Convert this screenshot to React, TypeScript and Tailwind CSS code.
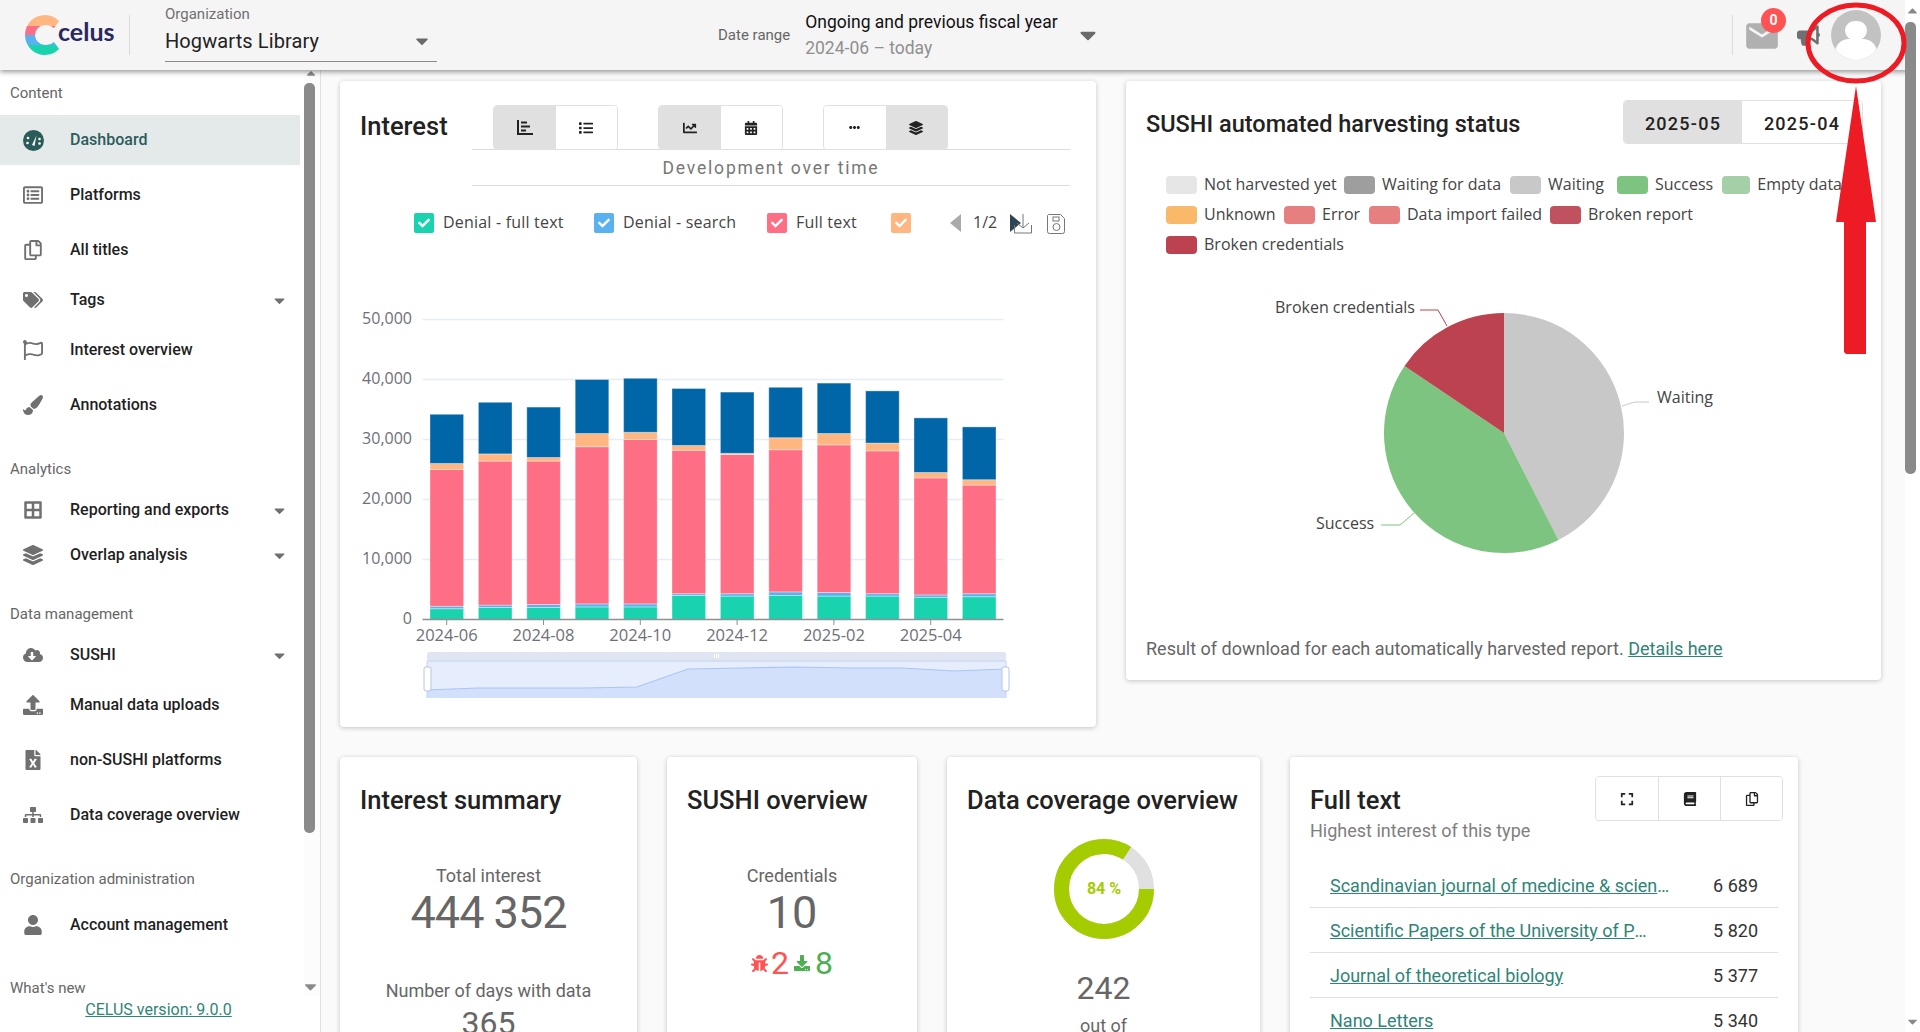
import type { ReactNode } from "react";
import {
  FaBook,
  FaBorderAll,
  FaBug,
  FaBullhorn,
  FaCalendarAlt,
  FaCaretDown,
  FaChartLine,
  FaCheck,
  FaCloudDownloadAlt,
  FaDownload,
  FaEllipsisH,
  FaExpand,
  FaFileExcel,
  FaLayerGroup,
  FaList,
  FaPaintBrush,
  FaRegCopy,
  FaRegFlag,
  FaRegListAlt,
  FaSitemap,
  FaTags,
  FaUpload,
  FaUser,
} from "react-icons/fa";
import { MdEmail } from "react-icons/md";

function GaugeIcon() {
  return (
    <svg width="21" height="21" viewBox="0 0 21 21">
      <circle cx="10.5" cy="10.5" r="10.5" fill="currentColor" />
      <path d="M9 15 L13.5 5.5 L11.5 16 Z" fill="#fff" />
      <circle cx="5" cy="8" r="1.3" fill="#fff" />
      <circle cx="4.5" cy="13" r="1.3" fill="#fff" />
      <circle cx="16.5" cy="9" r="1.3" fill="#fff" />
      <circle cx="16.5" cy="13.5" r="1.3" fill="#fff" />
    </svg>
  );
}

function AxisBarsIcon() {
  return (
    <svg width="16" height="15" viewBox="0 0 16 15" fill="currentColor">
      <path d="M0 0h2v13h14v2H0z" />
      <rect x="4" y="1.5" width="6" height="2" />
      <rect x="4" y="5.5" width="9" height="2" />
      <rect x="4" y="9.5" width="5" height="2" />
    </svg>
  );
}

type NavRow = {
  kind: "label" | "item";
  text: string;
  icon?: ReactNode;
  mt: string;
  caret?: boolean;
  active?: boolean;
};

const navRows: NavRow[] = [
  { kind: "label", text: "Content", mt: "mt-[11px]" },
  { kind: "item", text: "Dashboard", icon: <GaugeIcon />, mt: "mt-[10px]", active: true },
  { kind: "item", text: "Platforms", icon: <FaRegListAlt />, mt: "mt-[10px]" },
  { kind: "item", text: "All titles", icon: <FaRegCopy />, mt: "mt-[15px]" },
  { kind: "item", text: "Tags", icon: <FaTags />, mt: "mt-[10px]", caret: true },
  { kind: "item", text: "Interest overview", icon: <FaRegFlag />, mt: "mt-[10px]" },
  { kind: "item", text: "Annotations", icon: <FaPaintBrush />, mt: "mt-[15px]" },
  { kind: "label", text: "Analytics", mt: "mt-[32px]" },
  { kind: "item", text: "Reporting and exports", icon: <FaBorderAll />, mt: "mt-[9px]", caret: true },
  { kind: "item", text: "Overlap analysis", icon: <FaLayerGroup />, mt: "mt-[5px]", caret: true },
  { kind: "label", text: "Data management", mt: "mt-[27px]" },
  { kind: "item", text: "SUSHI", icon: <FaCloudDownloadAlt />, mt: "mt-[9px]", caret: true },
  { kind: "item", text: "Manual data uploads", icon: <FaUpload />, mt: "mt-[10px]" },
  { kind: "item", text: "non-SUSHI platforms", icon: <FaFileExcel />, mt: "mt-[15px]" },
  { kind: "item", text: "Data coverage overview", icon: <FaSitemap />, mt: "mt-[15px]" },
  { kind: "label", text: "Organization administration", mt: "mt-[32px]" },
  { kind: "item", text: "Account management", icon: <FaUser />, mt: "mt-[14px]" },
  { kind: "label", text: "What's new", mt: "mt-[31px]" },
];

// cumulated tops of the stacked bars, in thousands
const bars = [
  [1.8, 2.2, 25.0, 26.0, 34.2],
  [2.0, 2.4, 26.4, 27.6, 36.2],
  [2.0, 2.5, 26.4, 27.0, 35.4],
  [2.1, 2.6, 28.8, 31.0, 40.0],
  [2.1, 2.6, 30.0, 31.2, 40.2],
  [4.0, 4.3, 28.2, 29.0, 38.5],
  [3.9, 4.3, 27.5, 27.7, 37.9],
  [4.0, 4.6, 28.3, 30.3, 38.7],
  [3.9, 4.5, 29.1, 31.0, 39.4],
  [3.9, 4.3, 28.1, 29.4, 38.1],
  [3.7, 4.1, 23.6, 24.5, 33.6],
  [3.8, 4.3, 22.4, 23.3, 32.1],
];
const barColors = ["#19d3ae", "#5ab1ef", "#fe6e85", "#ffb680", "#0066a7"];
const axisDates = ["2024-06", "2024-08", "2024-10", "2024-12", "2025-02", "2025-04"];

const sliderLine: [number, number][] = [
  [427, 690], [478, 688], [532, 688], [585, 688], [637, 687], [688, 669],
  [742, 668], [795, 667], [849, 668], [902, 668], [954, 671], [1006, 669],
];

function Caret({ className }: { className: string }) {
  return <FaCaretDown className={className} />;
}

function Toggle({ items, active, divided }: { items: ReactNode[]; active: number[]; divided?: boolean }) {
  return (
    <div className="flex h-[45px] rounded border border-[#e0e0e0] overflow-hidden bg-white">
      {items.map((it, i) => (
        <div
          key={i}
          className={`${divided ? "w-[62px]" : "w-[61.5px]"} flex items-center justify-center text-[14px] text-[#222] ${active.includes(i) ? "bg-[#e0e0e0]" : "bg-white"} ${divided && i > 0 ? "border-l border-[#e0e0e0]" : ""}`}
        >
          {it}
        </div>
      ))}
    </div>
  );
}

function Sidebar() {
  return (
    <aside className="w-[321px] shrink-0 bg-white border-r border-[#e0e0e0] flex flex-col">
      <div className="flex h-[926px]">
        <div className="w-[304px] shrink-0">
          {navRows.map((r) =>
            r.kind === "label" ? (
              <div key={r.text} className={`${r.mt} h-[24px] pl-[10px] flex items-center text-[15px] text-[#666]`}>
                {r.text}
              </div>
            ) : (
              <div
                key={r.text}
                className={`${r.mt} ${r.active ? "h-[50px] w-[300px] bg-[#e4eaea] text-[#2c5c5a]" : "h-[40px] w-[300px] text-[#1f1f1f]"} flex items-center pl-[22px] pr-[12px] text-[16px] font-medium`}
              >
                <span className={`w-[22px] flex justify-center text-[20px] mr-[26px] ${r.active ? "text-[#2c5c5a]" : "text-[#707070]"}`}>
                  {r.icon}
                </span>
                <span className="flex-1">{r.text}</span>
                {r.caret && <Caret className="text-[17px] text-[#707070]" />}
              </div>
            ),
          )}
        </div>
        <div className="w-[16px] flex flex-col items-start bg-[#fcfcfc]">
          <FaCaretDown className="rotate-180 text-[14px] text-[#8a8a8a] -mt-[3px]" />
          <div className="w-[11px] h-[750px] mt-[2px] rounded-[5px] bg-[#8a8a8a]" />
          <div className="flex-1" />
          <FaCaretDown className="text-[19px] text-[#8a8a8a] -ml-[3px]" />
        </div>
      </div>
      <div className="h-[22px] mt-[2px] text-center pr-[3px]">
        <span className="text-[16px] leading-[22px] underline text-[#2e8577]">CELUS version: 9.0.0</span>
      </div>
    </aside>
  );
}

function Header() {
  return (
    <header className="relative z-10 h-[70px] shrink-0 bg-[#f5f5f5] shadow-[0_2px_5px_rgba(0,0,0,0.4)] flex items-center">
      <div className="w-[130px] h-[40px] border-r border-[#dcdcdc] shrink-0 flex items-center">
        <svg width="36" height="40" viewBox="0 0 36 40" className="ml-[25px] shrink-0">
          <defs>
            <clipPath id="logoC">
              <path d="M20 0a20 20 0 0 1 14 6l-5 7a12 12 0 0 0-9-3 10 10 0 0 0 0 20 12 12 0 0 0 9-3l5 7a20 20 0 0 1-14 6A20 20 0 0 1 20 0z" />
            </clipPath>
          </defs>
          <g clipPath="url(#logoC)">
            <rect x="0" y="0" width="36" height="11" fill="#ffb680" />
            <rect x="0" y="11" width="36" height="9" fill="#fe6e85" />
            <rect x="0" y="20" width="36" height="10" fill="#5ab1ef" />
            <rect x="0" y="30" width="36" height="10" fill="#19d3ae" />
          </g>
        </svg>
        <span className="-ml-[3px] -mt-[8px] text-[25px] leading-none font-bold font-['Lato'] text-[#28285e]">celus</span>
      </div>
      <div className="ml-[35px] w-[272px] h-[62px] self-start flex flex-col border-b border-[#8a8a8a]">
        <span className="text-[15px] leading-[16px] mt-[6px] text-[#707070]">Organization</span>
        <div className="flex items-center justify-between mt-[5px] pr-[5px]">
          <span className="text-[20px] leading-[28px] tracking-[0.1px] text-[#222]">Hogwarts Library</span>
          <Caret className="text-[20px] text-[#6a6a6a]" />
        </div>
      </div>
      <span className="ml-[281px] text-[15px] text-[#666]">Date range</span>
      <div className="ml-[15px] w-[270px] flex flex-col">
        <span className="text-[17.5px] leading-[24px] text-[#111]">Ongoing and previous fiscal year</span>
        <span className="mt-[2px] text-[17.5px] leading-[24px] text-[#8f8f8f]">2024-06 – today</span>
      </div>
      <Caret className="text-[26px] text-[#6a6a6a]" />
      <div className="flex-1" />
      <div className="h-[40px] border-l border-[#dcdcdc]" />
      <div className="relative ml-[10px] mt-[2px] text-[#b0b0b0] text-[38px]">
        <MdEmail />
        <span className="absolute -top-[9px] left-[18px] w-[25px] h-[25px] rounded-full bg-[#ff5252] text-white text-[14px] font-bold flex items-center justify-center">0</span>
      </div>
      <FaBullhorn className="ml-[16px] text-[23px] text-[#707070]" />
      <div className="ml-[11px] w-[50px] h-[50px] rounded-full bg-[#c2c2c2] overflow-hidden flex flex-col items-center">
        <div className="mt-[11px] w-[22px] h-[22px] rounded-full bg-white" />
        <div className="-mt-[1px] w-[42px] h-[24px] rounded-t-[14px] bg-white" />
      </div>
      <div className="w-[39px]" />
    </header>
  );
}

function LegendCheck({ color, text, width }: { color: string; text?: string; width: string }) {
  const box = color === "teal" ? "bg-[#19d3ae]" : color === "blue" ? "bg-[#5ab1ef]" : color === "pink" ? "bg-[#fe6e85]" : "bg-[#ffb680]";
  return (
    <div className={`${width} flex items-center`}>
      <span className={`w-[20px] h-[20px] rounded-[2px] ${box} flex items-center justify-center text-white text-[12px]`}>
        <FaCheck />
      </span>
      {text && <span className="ml-[9px] -mt-[3px] font-['Open_Sans'] text-[16px] tracking-[0.2px] text-[#444] whitespace-nowrap">{text}</span>}
    </div>
  );
}

function BarChart() {
  const y = (v: number) => 619.5 - v * 6;
  const barX = (i: number) => 430 + i * 48.4;
  return (
    <svg viewBox="340 290 756 430" width="756" height="430" className="block mt-[57px] font-['Open_Sans']">
      {[10, 20, 30, 40, 50].map((v) => (
        <line key={v} x1="422.5" x2="1003.5" y1={y(v)} y2={y(v)} stroke="#e8ecf4" strokeWidth="1.5" />
      ))}
      {[0, 10, 20, 30, 40, 50].map((v) => (
        <text key={v} x="412" y={y(v) + 4} textAnchor="end" fontSize="16" fill="#6e7079">
          {v === 0 ? "0" : `${v},000`}
        </text>
      ))}
      {bars.map((b, i) =>
        b.map((top, s) => {
          const prev = s === 0 ? 0 : b[s - 1];
          return (
            <rect
              key={s}
              x={barX(i)}
              y={y(top)}
              width="33.6"
              height={y(prev) - y(top)}
              fill={barColors[s]}
              stroke="#ffffff"
              strokeOpacity="0.35"
              strokeWidth="1"
            />
          );
        }),
      )}
      <line x1="422.5" x2="1003.5" y1="619.5" y2="619.5" stroke="#8f8f96" strokeWidth="1.5" />
      {axisDates.map((d, i) => (
        <g key={d}>
          <line x1={446.7 + i * 96.8} x2={446.7 + i * 96.8} y1="619.5" y2="625" stroke="#8f8f96" />
          <text x={446.7 + i * 96.8} y="641" textAnchor="middle" fontSize="16.5" fill="#6e7079">
            {d}
          </text>
        </g>
      ))}
      <rect x="427" y="652" width="579" height="9" rx="2" fill="#dfe5f2" />
      <rect x="427" y="661" width="579" height="37" fill="#e6edfd" />
      <path
        d={`M427 698 L${sliderLine.map((p) => p.join(" ")).join(" L")} L1006 698 Z`}
        fill="#d3e0fb"
      />
      <polyline points={sliderLine.map((p) => p.join(",")).join(" ")} fill="none" stroke="#a9c4f7" strokeWidth="1.2" />
      <line x1="427" x2="427" y1="661" y2="698" stroke="#c5d2ec" />
      <line x1="1006" x2="1006" y1="661" y2="698" stroke="#c5d2ec" />
      <line x1="427" x2="1006" y1="661" y2="661" stroke="#c5d2ec" />
      <rect x="424" y="667" width="7" height="24" rx="2" fill="#fff" stroke="#b4c4e6" />
      <rect x="1002" y="667" width="7" height="24" rx="2" fill="#fff" stroke="#b4c4e6" />
      <rect x="714" y="654" width="1" height="4" fill="#fff" />
      <rect x="716" y="654" width="1" height="4" fill="#fff" />
      <rect x="718" y="654" width="1" height="4" fill="#fff" />
    </svg>
  );
}

function InterestCard() {
  return (
    <section className="w-[756px] h-[646px] shrink-0 bg-white rounded shadow-[0_1px_5px_rgba(0,0,0,0.22)]">
      <div className="flex">
        <div className="w-[132px] pl-[20px] pt-[27px] text-[25.5px] leading-[36px] font-medium text-[#222]">Interest</div>
        <div className="w-[598px]">
          <div className="h-[69px] pt-[24px] pl-[21px] flex gap-[40px] border-b border-[#dcdcdc]">
            <Toggle items={[<AxisBarsIcon key="a" />, <FaList key="b" />]} active={[0]} />
            <Toggle items={[<FaChartLine key="a" />, <FaCalendarAlt key="b" />]} active={[0]} />
            <Toggle items={[<FaEllipsisH key="a" className="text-[11px]" />, <FaLayerGroup key="b" />]} active={[1]} />
          </div>
          <div className="h-[36px] pt-[2px] flex items-center justify-center border-b border-[#dcdcdc] text-[17.5px] tracking-[1.8px] text-[#777]">
            Development over time
          </div>
        </div>
      </div>
      <div className="mt-[27px] h-[20px] pl-[74px] flex items-center">
        <LegendCheck color="teal" text="Denial - full text" width="w-[180px]" />
        <LegendCheck color="blue" text="Denial - search" width="w-[173px]" />
        <LegendCheck color="pink" text="Full text" width="w-[124px]" />
        <LegendCheck color="orange" width="w-[59px]" />
        <span className="w-0 h-0 border-y-[9px] border-y-transparent border-r-[11px] border-r-[#aaa]" />
        <span className="ml-[12px] -mt-[3px] w-[37px] font-['Open_Sans'] text-[16px] text-[#444]">1/2</span>
        <span className="w-0 h-0 border-y-[9px] border-y-transparent border-l-[11px] border-l-[#2f4554]" />
        <svg width="18" height="20" viewBox="0 0 18 20" className="-ml-[7px] mt-[2px]" fill="none" stroke="#777" strokeWidth="1">
          <path d="M9 0v14M3 9l6 5 6-5M0.5 11v8h17v-8" />
        </svg>
        <svg width="19" height="20" viewBox="0 0 19 20" className="ml-[15px] mt-[2px]" fill="none" stroke="#777" strokeWidth="1">
          <path d="M1.5 0.5h12l4 4v13a2 2 0 0 1-2 2h-13a2 2 0 0 1-2-2v-16z" />
          <rect x="6" y="3" width="6" height="4" />
          <circle cx="9.5" cy="13" r="3.5" />
        </svg>
      </div>
      <BarChart />
    </section>
  );
}

const sushiLegend = [
  [
    { t: "Not harvested yet", c: "bg-[#e6e6e6]", w: "w-[178px]" },
    { t: "Waiting for data", c: "bg-[#9e9e9e]", w: "w-[166px]" },
    { t: "Waiting", c: "bg-[#c8c8c8]", w: "w-[107px]" },
    { t: "Success", c: "bg-[#7cc47f]", w: "w-[105px]" },
    { t: "Empty data", c: "bg-[#a5d0a7]", w: "w-[120px]" },
  ],
  [
    { t: "Unknown", c: "bg-[#f9b968]", w: "w-[118px]" },
    { t: "Error", c: "bg-[#e68080]", w: "w-[85px]" },
    { t: "Data import failed", c: "bg-[#e68080]", w: "w-[181px]" },
    { t: "Broken report", c: "bg-[#c05260]", w: "w-[145px]" },
  ],
  [{ t: "Broken credentials", c: "bg-[#bc4250]", w: "w-[180px]" }],
];

function slice(start: number, end: number) {
  const cx = 1504;
  const cy = 432;
  const r = 120;
  const pt = (a: number) => {
    const rad = (a * Math.PI) / 180;
    return `${cx + r * Math.sin(rad)} ${cy - r * Math.cos(rad)}`;
  };
  return `M${cx} ${cy} L${pt(start)} A${r} ${r} 0 ${end - start > 180 ? 1 : 0} 1 ${pt(end)} Z`;
}

function HarvestCard() {
  return (
    <section className="w-[755px] h-[599px] shrink-0 bg-white rounded shadow-[0_1px_5px_rgba(0,0,0,0.22)] overflow-hidden">
      <div className="flex pt-[19px] pl-[20px]">
        <div className="flex-1 h-[44px] pt-[6px] flex items-center text-[23.5px] font-medium text-[#222]">
          SUSHI automated harvesting status
        </div>
        <div className="flex h-[44px] mr-[18px] rounded border border-[#e0e0e0] overflow-hidden text-[18px] font-medium tracking-[1.25px] text-[#222]">
          <div className="w-[118px] pt-[2px] bg-[#e0e0e0] flex items-center justify-center">2025-05</div>
          <div className="w-[120px] pt-[2px] bg-white flex items-center justify-center">2025-04</div>
        </div>
      </div>
      <div className="mt-[32px] ml-[40px] flex flex-col gap-[12px]">
        {sushiLegend.map((row, i) => (
          <div key={i} className="flex h-[18px]">
            {row.map((l) => (
              <div key={l.t} className={`${l.w} shrink-0 flex items-center`}>
                <span className={`w-[31px] h-[18px] rounded-[4px] ${l.c}`} />
                <span className="ml-[7px] -mt-[3px] font-['Open_Sans'] text-[16px] text-[#444] whitespace-nowrap">{l.t}</span>
              </div>
            ))}
          </div>
        ))}
      </div>
      <svg viewBox="1126 275 755 340" width="755" height="340" className="block mt-[22px] font-['Open_Sans']">
        <path d={slice(0, 153)} fill="#c8c8c8" />
        <path d={slice(153, 304)} fill="#7cc47f" />
        <path d={slice(304, 360)} fill="#bc4250" />
        <polyline points="1420,309 1438,309 1447,325" fill="none" stroke="#bc4250" />
        <polyline points="1649,401 1635,401 1622,405" fill="none" stroke="#c8c8c8" />
        <polyline points="1381,524 1400,524 1414,512" fill="none" stroke="#7cc47f" />
        <text x="1275" y="312" fontSize="16" fill="#444">Broken credentials</text>
        <text x="1657" y="402" fontSize="16" fill="#444">Waiting</text>
        <text x="1316" y="528" fontSize="16" fill="#444">Success</text>
      </svg>
      <p className="mt-[21px] pl-[20px] text-[18px] leading-[24px] text-[#666]">
        Result of download for each automatically harvested report.{" "}
        <span className="underline text-[#2e8577]">Details here</span>
      </p>
    </section>
  );
}

function SmallCard({ width, title, children }: { width: string; title: string; children: ReactNode }) {
  return (
    <section className={`${width} h-[420px] shrink-0 bg-white rounded shadow-[0_1px_5px_rgba(0,0,0,0.22)]`}>
      <h2 className="pt-[25px] pl-[20px] text-[25.5px] leading-[36px] font-medium text-[#222] whitespace-nowrap">{title}</h2>
      {children}
    </section>
  );
}

const fullText = [
  { t: "Scandinavian journal of medicine & science in sports", v: "6 689" },
  { t: "Scientific Papers of the University of Pardubice", v: "5 820", w: "w-[320px]" },
  { t: "Journal of theoretical biology", v: "5 377" },
  { t: "Nano Letters", v: "5 340" },
];

function BottomRow() {
  return (
    <div className="flex mt-[30px] items-start">
      <SmallCard width="w-[297px]" title="Interest summary">
        <div className="mt-[46px] text-center text-[#666]">
          <div className="text-[18px] leading-[24px]">Total interest</div>
          <div className="text-[45px] leading-[50px] tracking-[-1px]">444 352</div>
          <div className="mt-[41px] text-[18px] leading-[24px]">Number of days with data</div>
          <div className="mt-[2px] text-[32px] leading-[36px]">365</div>
        </div>
      </SmallCard>
      <div className="w-[30px] shrink-0" />
      <SmallCard width="w-[250px]" title="SUSHI overview">
        <div className="mt-[46px] text-center text-[#666]">
          <div className="text-[18px] leading-[24px]">Credentials</div>
          <div className="text-[45px] leading-[50px]">10</div>
          <div className="mt-[7px] flex items-center justify-center text-[32px] leading-[36px]">
            <FaBug className="text-[17px] text-[#ff5252]" />
            <span className="ml-[3px] text-[#ff5252]">2</span>
            <FaDownload className="ml-[5px] text-[16px] text-[#4caf50]" />
            <span className="ml-[5px] text-[#4caf50]">8</span>
          </div>
        </div>
      </SmallCard>
      <div className="w-[30px] shrink-0" />
      <SmallCard width="w-[313px]" title="Data coverage overview">
        <div className="mt-[21px] flex justify-center">
          <svg width="100" height="100" viewBox="0 0 100 100">
            <circle cx="50" cy="50" r="42.5" fill="none" stroke="#e0e0e0" strokeWidth="15" />
            <circle
              cx="50"
              cy="50"
              r="42.5"
              fill="none"
              stroke="#a4cc00"
              strokeWidth="15"
              strokeDasharray={`${2 * Math.PI * 42.5 * 0.84} ${2 * Math.PI * 42.5}`}
            />
            <text x="50" y="55" textAnchor="middle" fontSize="16" fontWeight="700" fill="#a4cc00">84 %</text>
          </svg>
        </div>
        <div className="mt-[30px] text-center text-[#666]">
          <div className="text-[32px] leading-[38px]">242</div>
          <div className="mt-[7px] text-[18px] leading-[24px]">out of</div>
        </div>
      </SmallCard>
      <div className="w-[30px] shrink-0" />
      <section className="w-[508px] h-[420px] shrink-0 bg-white rounded shadow-[0_1px_5px_rgba(0,0,0,0.22)]">
        <div className="flex pt-[19px] pl-[20px] pr-[15px] justify-between">
          <div>
            <h2 className="pt-[6px] text-[25.5px] leading-[36px] font-medium text-[#222]">Full text</h2>
            <div className="mt-[1px] text-[18px] leading-[24px] text-[#808080]">Highest interest of this type</div>
          </div>
          <div className="h-[45px]">
            <Toggle divided items={[<FaExpand key="a" />, <FaBook key="b" />, <FaRegCopy key="c" />]} active={[]} />
          </div>
        </div>
        <div className="mt-[20px] mx-[20px] w-[468px]">
          {fullText.map((r, i) => (
            <div key={r.t} className={`h-[45px] flex items-center pl-[20px] text-[18px] ${i < 3 ? "border-b border-[#e0e0e0]" : ""}`}>
              <span className={`${r.w ?? "w-[344px]"} truncate underline text-[#2e8577]`}>{r.t}</span>
              <span className="ml-auto mr-[20px] text-[#333]">{r.v}</span>
            </div>
          ))}
        </div>
      </section>
    </div>
  );
}

export default function App() {
  return (
    <div className="relative w-[1920px] h-[1032px] overflow-hidden flex flex-col bg-[#fafafa] font-['Roboto',sans-serif]">
      <Header />
      <div className="flex flex-1 min-h-0">
        <Sidebar />
        <main className="flex-1 min-w-0 overflow-hidden pt-[11px] pl-[19px]">
          <div className="flex items-start gap-[30px]">
            <InterestCard />
            <HarvestCard />
          </div>
          <BottomRow />
        </main>
        <div className="w-[15px] shrink-0 bg-white flex flex-col items-start relative z-20 -mt-[70px]">
          <FaCaretDown className="rotate-180 text-[15px] text-[#8a8a8a] mt-[4px]" />
          <div className="w-[11px] h-[452px] mt-[3px] rounded-[5px] bg-[#8a8a8a]" />
          <div className="flex-1" />
          <FaCaretDown className="text-[15px] text-[#8a8a8a] mb-[3px]" />
        </div>
      </div>
      {/* red annotation drawn over the screenshot */}
      <svg className="absolute inset-0 z-30 pointer-events-none" width="1920" height="1032" viewBox="0 0 1920 1032">
        <ellipse cx="1856" cy="43" rx="48" ry="38" fill="none" stroke="#ed1c24" strokeWidth="5" />
        <path d="M1856 86 L1876 222 L1866 222 L1866 354 L1846 354 L1844 352 L1844 222 L1836 222 Z" fill="#ed1c24" />
      </svg>
    </div>
  );
}
